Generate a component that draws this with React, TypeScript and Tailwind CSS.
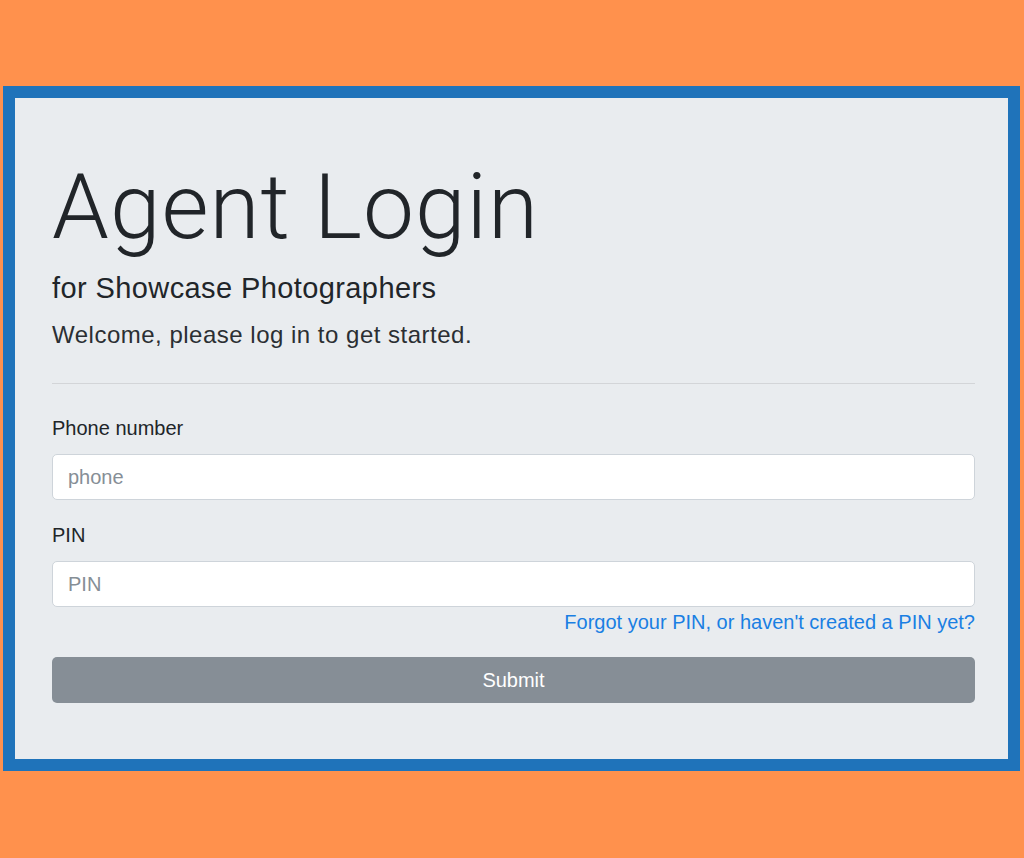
export default function App() {
  return (
    <div className="min-h-screen w-[1024px] h-[858px] bg-[#ff914d] pt-[86px] pl-[3px]">
      {/* blue framed card */}
      <div className="w-[1017px] h-[685px] border-[12px] border-[#1f73ba] bg-[#e9ecef] pl-[37px] pr-[33px] pt-[59px] font-['Liberation_Sans',Arial,sans-serif] text-[#212529]">
        <h1 className="font-['Roboto',sans-serif] font-light text-[91px] leading-[100px] tracking-[1px]">
          Agent Login
        </h1>
        <h4 className="mt-[14px] text-[29px] leading-[35px] tracking-[0.4px]">for Showcase Photographers</h4>
        <p className="mt-[11px] text-[24px] leading-[36px] tracking-[0.5px] text-[#2b2f33]">
          Welcome, please log in to get started.
        </p>
        <hr className="mt-[30px] border-0 border-t border-[#d3d5d8]" />

        <form className="mt-[29px] flex flex-col text-[20px]" onSubmit={(e) => e.preventDefault()}>
          <label className="leading-[30px]">Phone number</label>
          <input
            className="mt-[11px] h-[46px] w-full rounded-[5px] border border-[#ced4da] bg-white px-[15px] text-[20px] placeholder:text-[#868e96] outline-none"
            placeholder="phone"
          />
          <label className="mt-[20px] leading-[30px]">PIN</label>
          <input
            type="password"
            className="mt-[11px] h-[46px] w-full rounded-[5px] border border-[#ced4da] bg-white px-[15px] text-[20px] placeholder:text-[#868e96] outline-none"
            placeholder="PIN"
          />
          <a href="#" className="self-end leading-[30px] text-[#1a7fe3]">
            Forgot your PIN, or haven't created a PIN yet?
          </a>
          <button
            type="submit"
            className="mt-[20px] h-[46px] w-full rounded-[5px] bg-[#868e96] text-[20px] text-white"
          >
            Submit
          </button>
        </form>
      </div>
    </div>
  )
}
